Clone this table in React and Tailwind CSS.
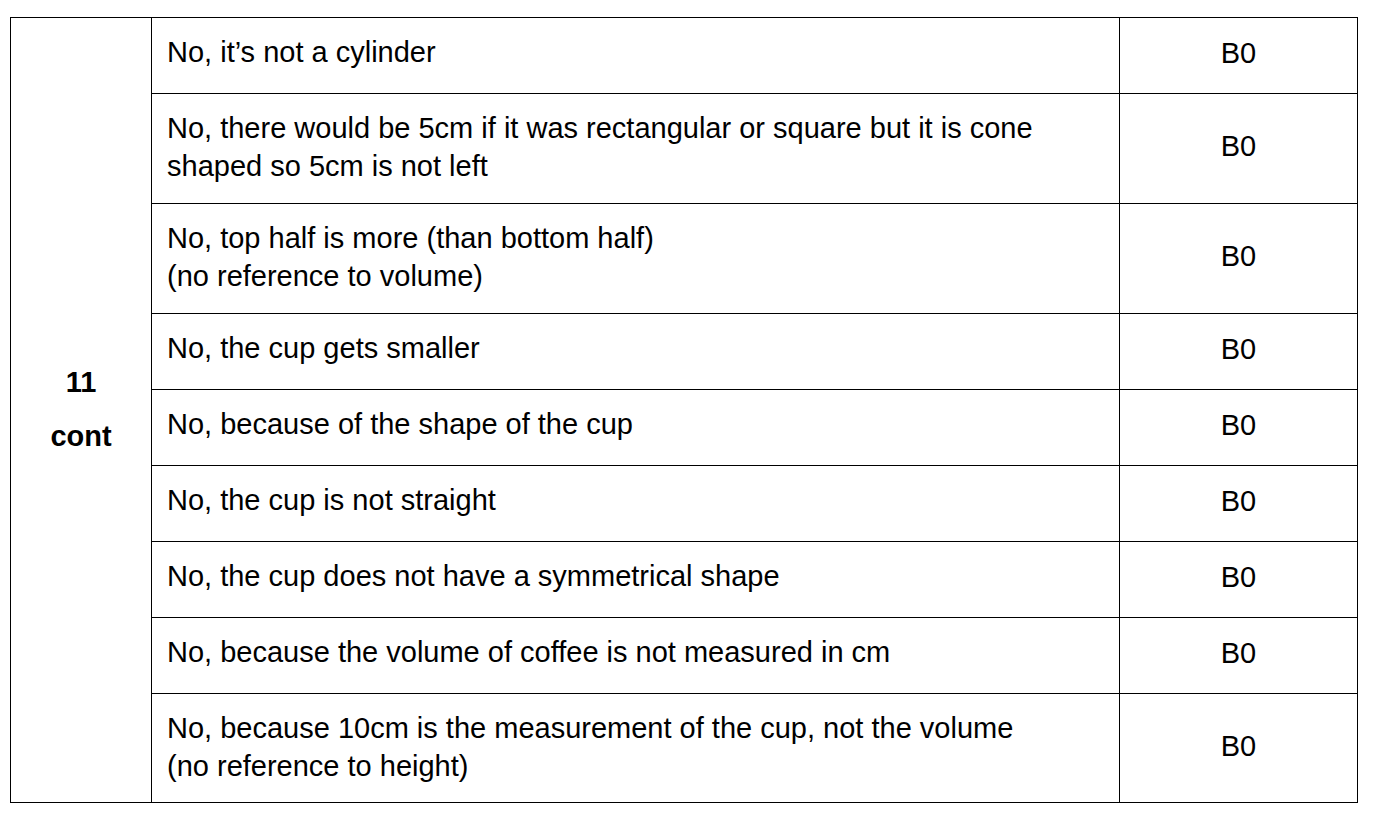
const rows = [
  { h: 'h-[76px]', text: ['No, it’s not a cylinder'] },
  { h: 'h-[110px]', text: ['No, there would be 5cm if it was rectangular or square but it is cone', 'shaped so 5cm is not left'] },
  { h: 'h-[110px]', text: ['No, top half is more (than bottom half)', '(no reference to volume)'] },
  { h: 'h-[76px]', text: ['No, the cup gets smaller'] },
  { h: 'h-[76px]', text: ['No, because of the shape of the cup'] },
  { h: 'h-[76px]', text: ['No, the cup is not straight'] },
  { h: 'h-[76px]', text: ['No, the cup does not have a symmetrical shape'] },
  { h: 'h-[76px]', text: ['No, because the volume of coffee is not measured in cm'] },
  { h: 'h-[109px]', text: ['No, because 10cm is the measurement of the cup, not the volume', '(no reference to height)'] },
];

export default function App() {
  return (
    <div className="w-[1376px] h-[825px] bg-white pt-[17px] pl-[10px] text-black font-['Liberation_Sans',Arial,sans-serif] text-[29px]">
      <div className="grid grid-cols-[141px_968px_238px] w-[1348px] border-l border-t border-black">
        {/* question number column spans every row */}
        <div className="row-span-9 border-r border-b border-black flex items-center justify-center pb-[2px]">
          <div className="text-center font-bold leading-[54px]">
            11<br />cont
          </div>
        </div>
        {rows.map((r, i) => (
          <div key={i} className="contents">
            <div className={`${r.h} border-r border-b border-black pt-[14.5px] pl-[15px] leading-[38.5px]`}>
              {r.text.map((t, j) => (
                <div key={j} className="whitespace-nowrap">{t}</div>
              ))}
            </div>
            <div className={`${r.h} border-r border-b border-black flex items-center justify-center pb-[4px] leading-[38.5px]`}>
              B0
            </div>
          </div>
        ))}
      </div>
    </div>
  );
}
